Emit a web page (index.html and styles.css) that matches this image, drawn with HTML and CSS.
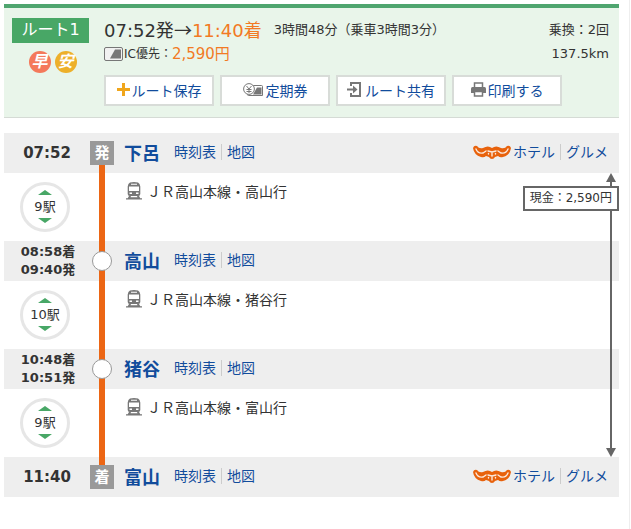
FILE: index.html
```html
<!DOCTYPE html>
<html lang="ja">
<head>
    <meta charset="UTF-8">
    <meta name="viewport" content="width=device-width, initial-scale=1.0">
    <title>下呂→富山 ルート1</title>
    <link rel="stylesheet" href="styles.css">
</head>
<body>

    <!-- 共通アイコン -->
    <svg class="sprite" aria-hidden="true">
        <symbol id="train" viewBox="0 0 16 18">
            <path fill="#777" fill-rule="evenodd" d="M4 .5Q8-.5 12 .5q2 1 2.300 4V12q0 2-2 2H3.700q-2 0-2-2V4.500Q2 1.500 4 .5zM5 1.700v1h6v-1zM3 4.500V9h10V4.500zM3.500 10.500V12H6v-1.500zM10 10.500V12h2.500v-1.500z"/>
            <path fill="#777" d="M3 14h2l-.5 1.200h7L11 14h2l1.300 2.300H16v1.200H0v-1.200h1.700z"/>
        </symbol>
        <symbol id="jalan" viewBox="0 0 38 14">
            <path fill="#e8620c" d="M0 3Q1 0 4 1q2 3 6 2 5-3 9 0 4-3 9 0 4 1 6-2 3-1 4 2-1 7-8 9-3 1-5-1l-3 1q-1 2-3 2t-3-2l-3-1q-2 2-5 1Q1 10 0 3z"/>
            <path fill="none" stroke="#fbe9dc" stroke-width="1.400" stroke-linecap="round" d="M3 4q2 5 7 4l3-2M35 4q-2 5-7 4l-3-2M15 6l4 1 4-1M19 8v3M15.500 8.500v.5M22.500 8.500v.5"/>
        </symbol>
    </svg>

    <header class="summary">
        <div class="summary-left">
            <h1 class="route-tag">ルート1</h1>
            <div class="badges">
                <span class="badge badge-fast">早</span>
                <span class="badge badge-cheap">安</span>
            </div>
        </div>
        <div class="summary-main">
            <div class="summary-row">
                <p class="time-total">07:52発<span class="arrow">→</span><span class="accent">11:40着</span></p>
                <p class="duration">3時間48分（乗車3時間3分）</p>
                <p class="right-info">乗換：2回</p>
            </div>
            <div class="summary-row">
                <svg class="ic-card" viewBox="0 0 19 14" aria-hidden="true">
                    <rect x="0.500" y="0.500" width="18" height="13" rx="1.500" fill="#f1f1f1" stroke="#777"/>
                    <path fill="#777" d="M11 2.500h6v9H6z"/>
                </svg>
                <p class="ic-label">IC優先：</p>
                <p class="ic-fare accent">2,590円</p>
                <p class="right-info">137.5km</p>
            </div>
            <div class="actions">
                <button type="button" class="action">
                    <svg width="13" height="13" viewBox="0 0 13 13" aria-hidden="true"><path fill="none" stroke="#f0a61c" stroke-width="3" d="M6.500 0v13M0 6.500h13"/></svg>
                    ルート保存
                </button>
                <button type="button" class="action">
                    <svg width="21" height="14" viewBox="0 0 21 14" aria-hidden="true">
                        <path fill="#fff" stroke="#777" d="M8 2.500h10.500q1 0 1 1v9h-14q-1 0-1-1V9"/>
                        <path fill="#777" d="M14 4.500h4.500v7H10z"/>
                        <circle cx="6" cy="6" r="5.400" fill="#fff" stroke="#777"/>
                        <path fill="none" stroke="#777" d="M3.500 3L6 6l2.500-3M6 6v4M3.500 6.500h5M3.500 8.500h5"/>
                    </svg>
                    定期券
                </button>
                <button type="button" class="action">
                    <svg width="16" height="15" viewBox="0 0 16 15" aria-hidden="true">
                        <path fill="none" stroke="#777" stroke-width="2" d="M4 4V1h9v13H4v-3"/>
                        <path fill="none" stroke="#777" stroke-width="2" d="M0 7.500h8"/>
                        <path fill="#777" d="M6 3.500l4.500 4L6 11.500z"/>
                    </svg>
                    ルート共有
                </button>
                <button type="button" class="action">
                    <svg width="15" height="15" viewBox="0 0 15 15" aria-hidden="true">
                        <path fill="#fff" stroke="#777" stroke-width="1.500" d="M3.500 6V1h8v5"/>
                        <path fill="#777" d="M1.500 5h12Q15 5 15 6.500V11H0V6.500Q0 5 1.500 5z"/>
                        <path fill="#fff" stroke="#777" stroke-width="1.500" d="M3.500 9.500h8v4.500h-8z"/>
                    </svg>
                    印刷する
                </button>
            </div>
        </div>
    </header>

    <main class="route">
        <section class="station">
            <div class="times time-single">07:52</div>
            <div class="track track-start"><span class="mark">発</span></div>
            <h2 class="name"><a href="#">下呂</a></h2>
            <nav class="links"><a href="#">時刻表</a><a href="#">地図</a></nav>
            <nav class="links links-right"><svg class="jalan"><use href="#jalan"/></svg><a href="#">ホテル</a><a href="#">グルメ</a></nav>
        </section>

        <section class="segment">
            <div class="stops"><button type="button" class="stops-button">9駅</button></div>
            <div class="track"></div>
            <p class="line"><svg class="train"><use href="#train"/></svg>ＪＲ高山本線・高山行</p>
        </section>

        <section class="station">
            <div class="times">08:58着<br>09:40発</div>
            <div class="track"><span class="dot"></span></div>
            <h2 class="name"><a href="#">高山</a></h2>
            <nav class="links"><a href="#">時刻表</a><a href="#">地図</a></nav>
        </section>

        <section class="segment">
            <div class="stops"><button type="button" class="stops-button">10駅</button></div>
            <div class="track"></div>
            <p class="line"><svg class="train"><use href="#train"/></svg>ＪＲ高山本線・猪谷行</p>
        </section>

        <section class="station">
            <div class="times">10:48着<br>10:51発</div>
            <div class="track"><span class="dot"></span></div>
            <h2 class="name"><a href="#">猪谷</a></h2>
            <nav class="links"><a href="#">時刻表</a><a href="#">地図</a></nav>
        </section>

        <section class="segment">
            <div class="stops"><button type="button" class="stops-button">9駅</button></div>
            <div class="track"></div>
            <p class="line"><svg class="train"><use href="#train"/></svg>ＪＲ高山本線・富山行</p>
        </section>

        <section class="station">
            <div class="times time-single">11:40</div>
            <div class="track track-end"><span class="mark">着</span></div>
            <h2 class="name"><a href="#">富山</a></h2>
            <nav class="links"><a href="#">時刻表</a><a href="#">地図</a></nav>
            <nav class="links links-right"><svg class="jalan"><use href="#jalan"/></svg><a href="#">ホテル</a><a href="#">グルメ</a></nav>
        </section>

        <!-- 運賃の区間矢印 -->
        <div class="fare">
            <span class="fare-label">現金：2,590円</span>
        </div>
    </main>

</body>
</html>
```

FILE: styles.css
```css
* {
    box-sizing: border-box;
}

body {
    margin: 0 1px 0 0;
    padding: 4px 10px 0 4px;
    min-height: 100vh;
    border-right: 1px solid #eee;
    background-color: #fff;
    color: #333;
    font-family: "DejaVu Sans", "Noto Sans CJK JP", sans-serif;
    font-size: 14px;
}

h1, h2, p {
    margin: 0;
    font-weight: normal;
}

a {
    color: #114c9c;
    text-decoration: none;
}

a:hover {
    text-decoration: underline;
}

button {
    font-family: inherit;
    cursor: pointer;
}

svg {
    flex: none;
}

.sprite {
    display: none;
}

.accent {
    color: #f27a24;
}

/* ルート概要 */
.summary {
    display: flex;
    gap: 15px;
    padding: 10px 10px 11px 8px;
    margin-bottom: 15px;
    border-top: 4px solid #4fa56f;
    border-bottom: 1px solid #d5dbd5;
    background-color: #e9f5ea;
}

.summary-left {
    width: 77px;
}

.route-tag {
    height: 25px;
    line-height: 24px;
    background-color: #48a766;
    color: #fff;
    font-size: 16px;
    text-align: center;
}

.badges {
    display: flex;
    justify-content: center;
    gap: 4px;
    margin-top: 8px;
    padding-left: 4px;
}

.badge {
    width: 22px;
    height: 22px;
    border-radius: 50%;
    color: #fff;
    font-size: 16px;
    font-weight: bold;
    font-style: italic;
    line-height: 22px;
    text-align: center;
}

.badge-fast {
    background-color: #f4795b;
}

.badge-cheap {
    background-color: #edb02a;
}

.summary-main {
    flex: 1;
}

.summary-row {
    display: flex;
    align-items: center;
    height: 24px;
    line-height: 24px;
    white-space: nowrap;
}

.time-total {
    font-size: 18px;
}

.arrow {
    font-family: "Noto Sans CJK JP", sans-serif;
}

.duration {
    margin-left: 12px;
    font-size: 13px;
}

.right-info {
    margin-left: auto;
    font-size: 13px;
}

.ic-card {
    width: 19px;
    height: 14px;
}

.ic-label {
    margin-left: 1px;
    font-size: 12px;
}

.ic-fare {
    font-size: 15px;
}

.actions {
    display: flex;
    gap: 6px;
    margin-top: 9px;
}

.action {
    display: flex;
    align-items: center;
    justify-content: center;
    gap: 2px;
    width: 110px;
    height: 31px;
    padding: 0 0 2px;
    border: 2px solid #d8dcd8;
    background-color: #fff;
    color: #114c9c;
    font-size: 14px;
    white-space: nowrap;
}

/* 経路 */
.route {
    position: relative;
}

.station,
.segment {
    display: flex;
}

.station {
    align-items: center;
    height: 40px;
    background-color: #eee;
}

.segment {
    height: 68px;
}

.times {
    width: 82px;
    padding-left: 6px;
    font-size: 13px;
    font-weight: bold;
    line-height: 18px;
    text-align: center;
}

.time-single {
    padding-left: 4px;
    font-size: 15px;
}

.track {
    display: flex;
    align-items: center;
    justify-content: center;
    align-self: stretch;
    width: 32px;
    background: linear-gradient(#ec6614, #ec6614) center / 6px 100% no-repeat;
}

.track-start {
    background-position: center bottom;
    background-size: 6px 50%;
}

.track-end {
    background-position: center top;
    background-size: 6px 50%;
}

.mark {
    width: 24px;
    height: 24px;
    background-color: #999;
    color: #fff;
    font-size: 15px;
    font-weight: bold;
    line-height: 24px;
    text-align: center;
}

.dot {
    width: 20px;
    height: 20px;
    border: 1px solid #999;
    border-radius: 50%;
    background-color: #fff;
}

.name {
    margin-left: 6px;
    padding-bottom: 2px;
    font-size: 18px;
    font-weight: bold;
}

.links {
    display: flex;
    align-items: center;
    margin-left: 14px;
    padding-bottom: 2px;
    line-height: 16px;
}

.links a + a {
    margin-left: 5px;
    padding-left: 5px;
    border-left: 1px solid #ccc;
}

.links-right {
    margin-left: auto;
    padding-right: 11px;
}

.jalan {
    width: 38px;
    height: 14px;
    margin-right: 2px;
}

.stops {
    display: flex;
    justify-content: center;
    align-items: center;
    width: 82px;
}

.stops-button {
    display: flex;
    flex-direction: column;
    align-items: center;
    justify-content: center;
    gap: 3px;
    width: 50px;
    height: 50px;
    padding: 0 0 2px;
    border: 3px solid #e6e6e6;
    border-radius: 50%;
    background-color: #fff;
    color: #333;
    font-size: 13px;
    line-height: 17px;
}

.stops-button::before,
.stops-button::after {
    content: "";
    border: 7px solid transparent;
}

.stops-button::before {
    border-top: 0;
    border-bottom: 5px solid #48a766;
}

.stops-button::after {
    border-bottom: 0;
    border-top: 5px solid #48a766;
}

.line {
    display: flex;
    align-items: center;
    gap: 5px;
    height: 20px;
    margin: 8px 0 0 8px;
}

.train {
    width: 16px;
    height: 18px;
}

/* 運賃 */
.fare {
    position: absolute;
    top: 40px;
    right: 0;
    bottom: 40px;
    padding-top: 13px;
    background: linear-gradient(#666, #666) right 7px center / 2px calc(100% - 8px) no-repeat;
}

.fare::before,
.fare::after {
    content: "";
    position: absolute;
    right: 3px;
    border: 5px solid transparent;
}

.fare::before {
    top: 0;
    border-top: 0;
    border-bottom: 9px solid #666;
}

.fare::after {
    bottom: 0;
    border-bottom: 0;
    border-top: 9px solid #666;
}

.fare-label {
    display: block;
    padding: 0 5px;
    border: 2px solid #666;
    background-color: #fff;
    font-size: 12px;
    line-height: 21px;
    white-space: nowrap;
}
```
